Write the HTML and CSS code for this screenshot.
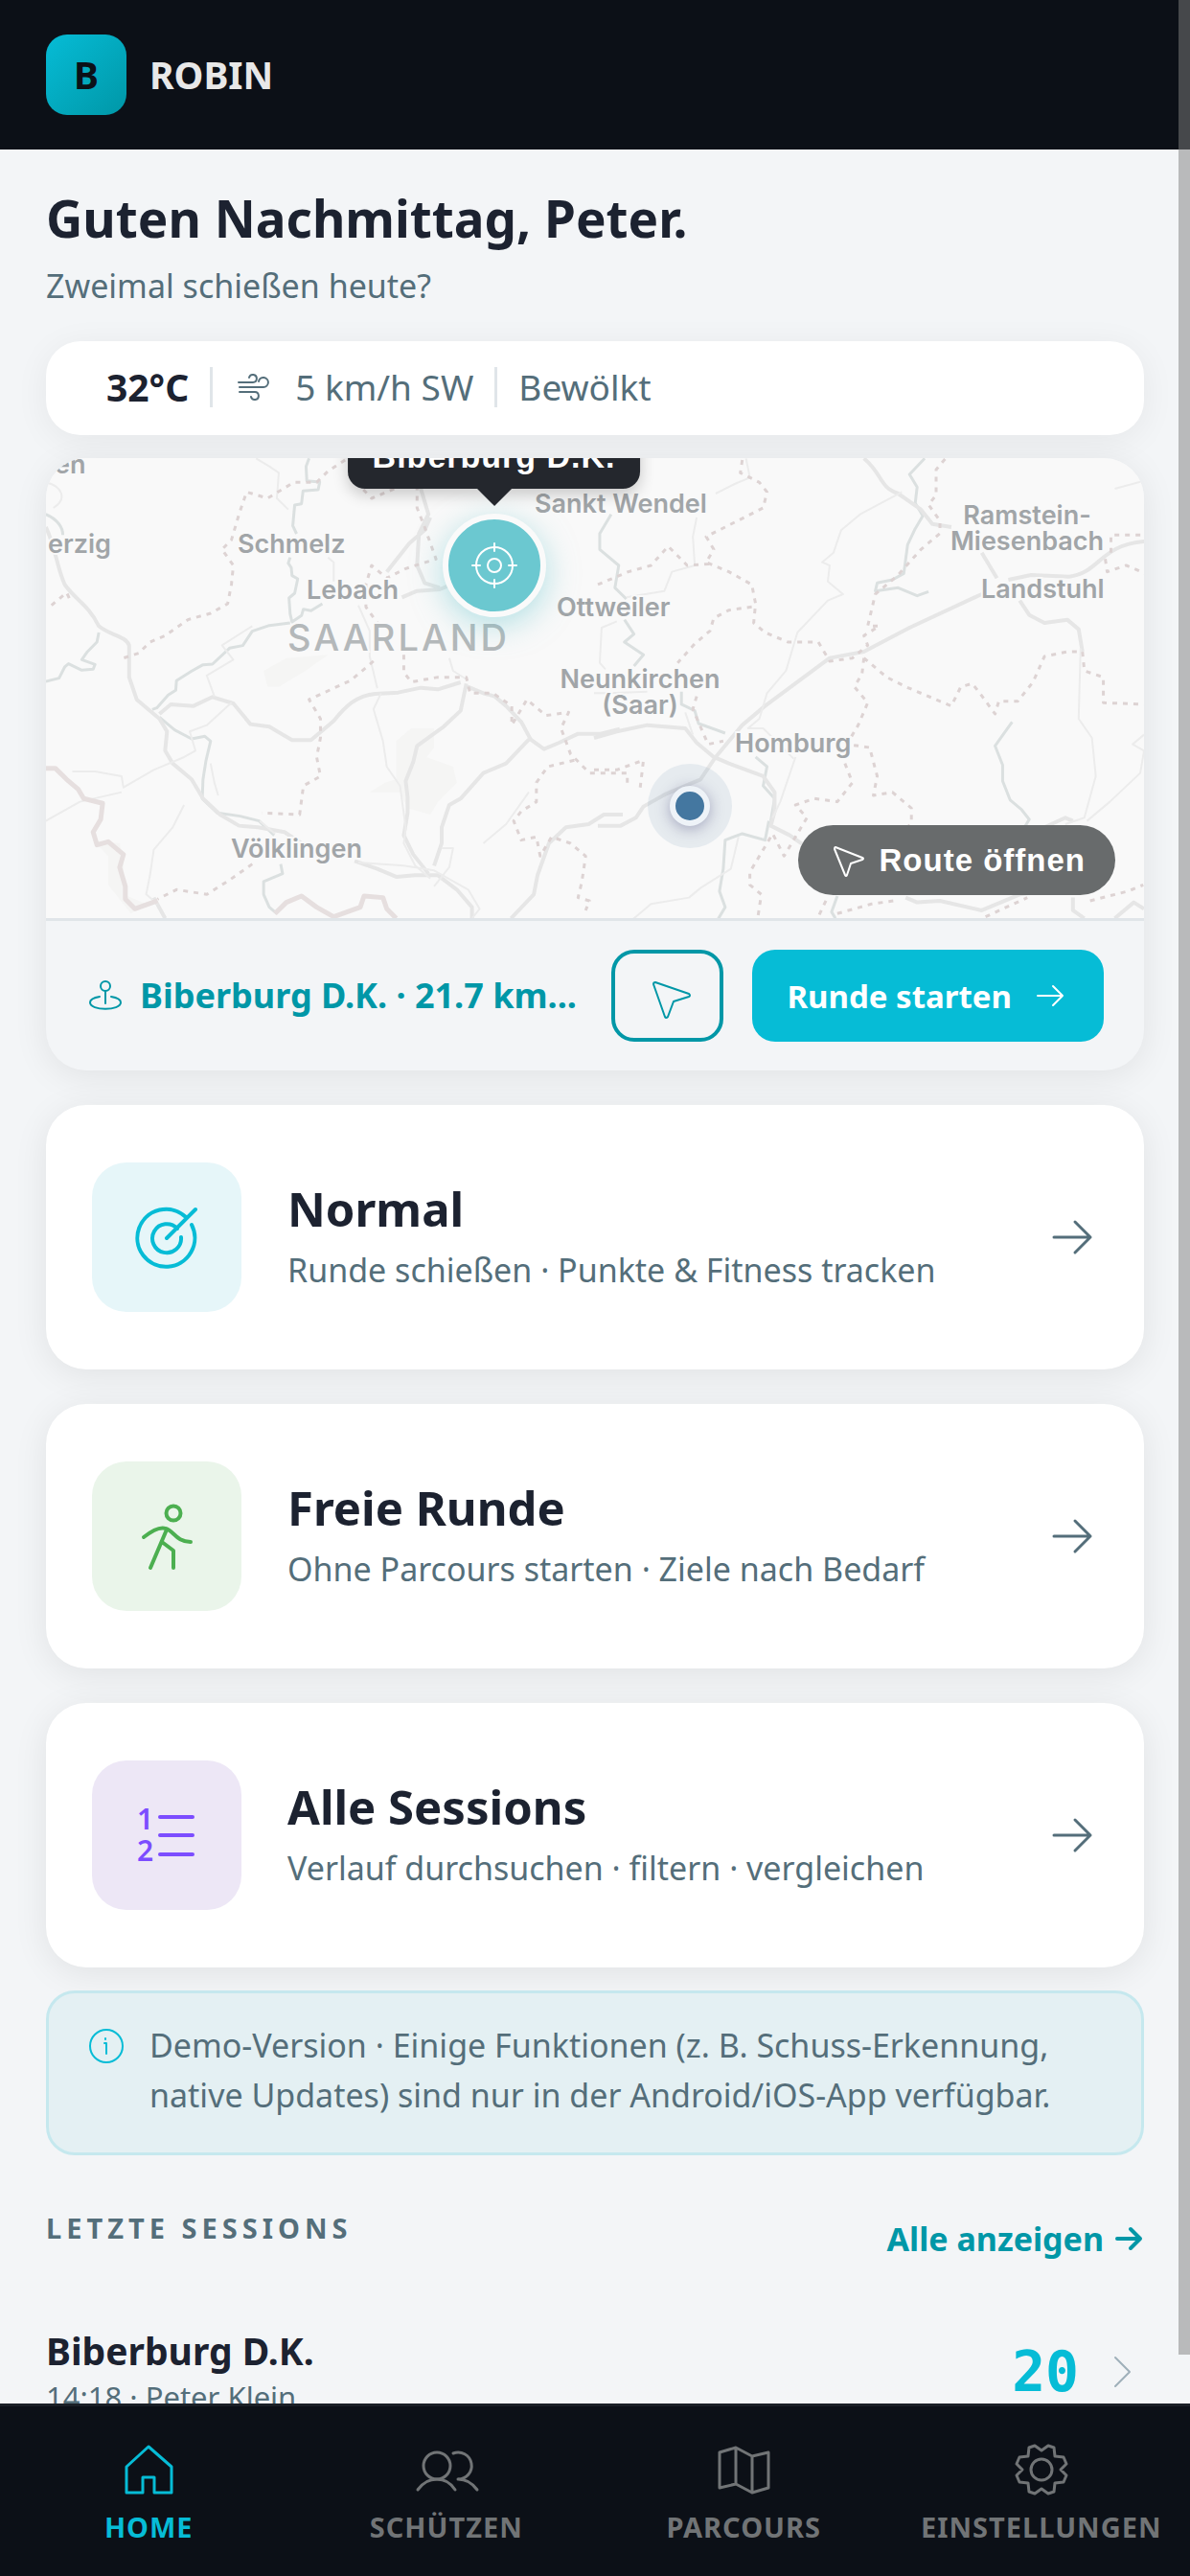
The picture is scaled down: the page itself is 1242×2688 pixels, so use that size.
FILE: index.html
```html
<!DOCTYPE html>
<html lang="de">
<head>
  <meta charset="UTF-8">
  <meta name="viewport" content="width=device-width, initial-scale=1.0">
  <title>ROBIN</title>
  <link rel="stylesheet" href="styles.css">
</head>
<body>
  <header class="topbar">
    <div class="logo">B</div>
    <div class="brand">ROBIN</div>
  </header>

  <main class="content">
    <h1>Guten Nachmittag, Peter.</h1>
    <p class="subtitle">Zweimal schießen heute?</p>

    <div class="weather">
      <strong>32°C</strong>
      <span class="divider"></span>
      <svg class="icon" width="42" height="42" viewBox="0 0 42 42">
        <path d="M5 16h15a4 4 0 1 0-4-5M6 21h25a5 5 0 1 0-5-6M6 26h16a4 4 0 1 1-4 5"/>
      </svg>
      <span>5 km/h SW</span>
      <span class="divider"></span>
      <span>Bewölkt</span>
    </div>

    <section class="map-card">
      <div class="map">
        <svg class="map-tiles" viewBox="0 0 1146 480" preserveAspectRatio="xMinYMin slice">
          <!-- west half -->
          <g transform="translate(-18 -18) scale(.3954 .3333)">
            <path class="area" d="M970 940l40-40 60 0 0 60-20 30 70 30 10 50-50 60-20 40-60-20-20-50-80 0 40-30 30-10z"/>
            <path class="area" d="M620 720l60-40 110-10-60 50-70 50-30 0z"/>
            <path class="area" d="M170 1250l70 10 10 60 0 100 60 30-40 30-60-90 0-90z"/>
            <path class="river" d="M740 55l-8 25 2 45 34 4-4 24-40 4-4 40-18 4-5 65 10 25M690 365l-5 18 8 14 2 25 15 10-8 45-15 15 3 50 5 25 25-20 5-20 20 5 30-22M690 570l-55 8-45 18-25 45-35 8-45 50-25 2-30 20-40 30-2 30-20 15-30 40-12 5"/>
            <path class="river" d="M45 230c30 15 45 40 45 65M185 600l-5 30-25 30-15 25 35 15-5 15-30 3-35-20-10 10-15 35-35 10M345 865l40 40 45 28 35-8 15 15-12 60-8 60-2 60 40 45 60 10 50 15 40 45M665 1325l5 30-50 25 0 40 15 40 20 20"/>
            <path class="road major" d="M45 270c25 60 30 130 50 180 30 50 60 60 90 130 30 30 70 30 80 60l0 100 20 70 60 60 20 40-5 60 20 40 50 50 30 60 45 50 50 35 50 5 70 15 45 35M345 855l30-30 60 5 50-28 55 20 45 65 50 8 60 42 50 0 60-60c30-45 60-80 110-85l60-4 60-15 45 5 60-22"/>
            <path class="road major" d="M1150 765l50 25 30 10 30 30 40 50 25 55 35 30 40-20 50-28 60 0 50-15M1155 760l-15 85-45 50-70 60-10 50-20 60 5 50 0 50-10 70 25 60 40 60M1320 935l-60 75-60 30-60 80-30 20-20 70 0 50-20 70M1568 1170h-50l-40 30-60 10-45 50-30 100-10 60-60 75"/>
            <path class="road major" d="M860 1315l60 25 50 25 50-5 60 0 50 45 40 55 0 35M330 1430l30 65M1060 240l-15 40-40 40-60 90M985 490l40-20 60-5 40-20M1030 130l25 100-25 60-5 100 20 55 40 15"/>
            <path class="road" d="M930 790l-20 50 25 100 10 80 35 60 15 130-5 50 30 70 40 40M590 580l-80 60 30 45-70 50 20 65M535 820l-65 70-45 20 15 60-30 20-80 40-80 55-5-35-70-15-60 0M245 1100l-110 30-90 60M410 1140l-30 70-50 70-10 80-10 60 30 30M600 55l35 25 25 20-5 80 30 35M45 130c40 10 60 50 20 80M870 515l30 80 0 80 20 100M1110 680l10 40 40 30M790 365l15 15 0 60M480 1010l10 60 10 40M610 1190l40 40M870 1320l120 10 80 15 90 60 30 60-20 30M1090 1275l30 0-10 60-40 60M1200 1260l60-60 60-100"/>
            <path class="border" d="M835 60l-45 35-30 35-60 0-70 50-55-20-20 70-20 80-25 30 30 50-5 60-10 60-45 30-60 20-60 50-40 20-30 35-40 15M60 515l40-40 10 25M845 105l60 75 60-30 60-20 0 80 20 60 30 100-80 30-50 30-40-40-15 60 0 70 30 50"/>
            <path class="border" d="M990 670l0 55 20 30 70-15 75 0 10 50 60 0 50 40 0 60 40-80 50 50 60-10-20 50 25 80 50 60 100 0 0 30M910 690l-60 60-110 60 30 60 0 60-10 60 10 60-45 30-10 90-100-5M1440 1000l-70 20-30 50 0 60-40 30-20 30 20 60 40-10 10 60 30-60 50 20 40 40-10 80-10 50 30 10-10 30M590 1325l-60 50-60 45-80-15-50 30"/>
            <path class="state" d="M45 1025l25 0 30 35 30 30 15 30 50 15-5 50-20 40 10 40 30-10 40 40-10 40 15 60 0 40 25 30 60-25M650 1480l30-35 40-20 40 35 45 30 70-30 10-35 50 5 10 35 25 30"/>
          </g>
          <!-- east half -->
          <g transform="translate(572 -18) scale(.3967 .3333)">
            <path class="river" d="M870 55l-40 50 20 40-5 50 20 40-20 40-20 50-10 90-30 20-40 10-5 25 60-10 50 25 30-13M45 230l-30 60 0 50 50 50-10 70 30 35M80 560l25 45-25 25 50 40-25 35M230 785l0 40 35 20 10 40 70 30M425 990l30 30-10 60 30 40-10 70M460 1190l-10 60-60-20-45 20-5 90-10 70 15 50-20 40-30 10M1100 880l-45 75 20 60 0 50 20 60 30 30 20 30-20 40M640 1425l-15 50 10 20"/>
            <path class="road major" d="M710 55c50 50 40 90 90 110l60 50 30 45 50 10M1020 350l40 80M1090 435l60-15 100 5c80-10 80-100 200-110M1020 480l-190 105-120 75-90 20-170 150-60 60-70 100-40 70-90 45-60 40-20 35-40 25-60 0M0 930l60-20 80-20 100 10 30 45 45 45 40 20 90 40 30 50 0 60-10 45 50 30 60 50 40 20M1120 500l25 45 40 25 60-10 30 30 10 70M820 1430l30 15 60-5 110 30 100-50 60-10M1260 1190l-20-10-110 60M1260 1430l0 40 30 25M1370 1495l50-50 27 20"/>
            <path class="road" d="M400 55l10 60-40 20-50 30M810 160l-110 70-50 50-20 70-30 30 20 10-5 50 40 40-40 20-80 100-30 120-50 70-20 80-30 30 40 0 80 95M530 990l-40 140-20 50M380 1240l-20 100-80 60-30 30-100 20-50 50M1280 650l-5 220 35 60 10 120-30 130-50 20M1447 920l-30 30 30 20-10 70-80 90-60 60M270 240l-10 60 5 90-60 20-20 60-100 20M60 565l-40 20-5 110 15 20M240 850l20 70M0 790l40 0 100-5M1370 150l77-25"/>
            <path class="border" d="M390 60l-5 40 50 30 20 30-10 50-100 60-50 30 20 40-20 40 60 30 60 40 10 60-5 60 30 30 60 30 80 0 30 60 60-10 40-40-10-30 40-30-30 0 20-100 60-60 60-80 50-50 0-40-30-50 20-30 0-80 50-70-10-60M10 450l80-40 60-20 45-60 50 60 60-5M415 520l-60 10-40 25-10 40-40 40-45 60"/>
            <path class="border" d="M710 680l60 60 50 30 120 60 25-60 30-10 20 30 40 65 10-40 50 0 40-60 30-80 60-15 40 0 5 60 50 20 0 80 110 5M710 680l-5 50-20 40 35 50-25 70-30 60 60 10 20 90-10 60 50-10 50 50 0 45-20 30M660 1010l20 60-40 60-60-10-50 20 30 40-30 60-30 60-30-70-60 120 0 40 30 30-10 80M0 1030l60 0 70-30-10 100M270 800l-10 40 40 110 40-10M1360 350l0-55 90 0M1345 370l5 40 50-20 50 25M640 1480l90-30 60-10M1030 1490l110-60M610 1440l-20 50M1305 1440l100-30 40-20"/>
          </g>
          <g class="places">
            <text x="9" y="16">en</text>
            <text x="2" y="99">erzig</text>
            <text x="200" y="99">Schmelz</text>
            <text x="272" y="147">Lebach</text>
            <text x="510" y="57">Sankt Wendel</text>
            <text x="533" y="165">Ottweiler</text>
            <text x="620" y="240" text-anchor="middle">Neunkirchen</text>
            <text x="620" y="267" text-anchor="middle">(Saar)</text>
            <text x="719" y="307">Homburg</text>
            <text x="1024" y="69" text-anchor="middle">Ramstein-</text>
            <text x="1024" y="96" text-anchor="middle">Miesenbach</text>
            <text x="976" y="146">Landstuhl</text>
            <text x="193" y="417">Völklingen</text>
            <text class="region" x="252" y="201">SAARLAND</text>
          </g>
        </svg>

        <div class="marker course">
          <div class="tooltip">Biberburg D.K.</div>
          <svg class="icon" width="54" height="54" viewBox="0 0 54 54">
            <circle cx="27" cy="27" r="19"/>
            <circle cx="27" cy="27" r="7"/>
            <path d="M27 4v8M27 42v8M4 27h8M42 27h8"/>
          </svg>
        </div>
        <div class="marker me"></div>

        <button class="route-pill">
          <svg class="icon" width="42" height="42" viewBox="0 0 42 42">
            <path d="M8 7 36 18Q38 19 36 20L24 24 20 36Q19 38 18 36L7 9Q7 7 8 7z"/>
          </svg>
          Route öffnen
        </button>
      </div>

      <div class="map-footer">
        <svg class="icon place-icon" width="42" height="42" viewBox="0 0 42 42">
          <circle cx="20" cy="11" r="5"/>
          <path d="M20 16v13M14 22C8 23 4 25 4 28c0 9 32 9 32 0 0-3-4-5-10-6"/>
        </svg>
        <span class="place">Biberburg D.K. · 21.7 km...</span>
        <button class="btn-route" aria-label="Route">
          <svg class="icon" width="54" height="54" viewBox="0 0 54 54">
            <path d="M14 13 49 25Q51 27 49 28L33 33 27 49Q25 51 24 49L12 15Q12 13 14 13z"/>
          </svg>
        </button>
        <button class="btn-start">
          Runde starten
          <svg class="icon" width="42" height="42" viewBox="0 0 42 42">
            <path d="M9 21h26M25 11l10 10-10 10"/>
          </svg>
        </button>
      </div>
    </section>

    <a class="card" href="#normal">
      <div class="card-icon cyan">
        <svg class="icon" width="72" height="72" viewBox="0 0 72 72">
          <path d="M56 15A30 30 0 1 0 62 23M47 27A15 15 0 1 0 51 36M36 37 66 7"/>
        </svg>
      </div>
      <div class="card-text">
        <h2>Normal</h2>
        <p>Runde schießen · Punkte &amp; Fitness tracken</p>
      </div>
      <svg class="icon arrow" width="60" height="60" viewBox="0 0 60 60">
        <path d="M14 30h38M36 14l16 16-16 16"/>
      </svg>
    </a>

    <a class="card" href="#frei">
      <div class="card-icon green">
        <svg class="icon" width="72" height="72" viewBox="0 0 72 72">
          <circle cx="43" cy="12" r="7.5"/>
          <path d="M12 37Q27 25 35 28C43 30 46 42 61 42M36 29 19 69M31 42l12 9v18"/>
        </svg>
      </div>
      <div class="card-text">
        <h2>Freie Runde</h2>
        <p>Ohne Parcours starten · Ziele nach Bedarf</p>
      </div>
      <svg class="icon arrow" width="60" height="60" viewBox="0 0 60 60">
        <path d="M14 30h38M36 14l16 16-16 16"/>
      </svg>
    </a>

    <a class="card" href="#sessions">
      <div class="card-icon purple">
        <svg class="icon" width="72" height="72" viewBox="0 0 72 72">
          <text x="5" y="30">1</text>
          <text x="5" y="63">2</text>
          <path d="M29 17h34M29 36h34M29 56h34"/>
        </svg>
      </div>
      <div class="card-text">
        <h2>Alle Sessions</h2>
        <p>Verlauf durchsuchen · filtern · vergleichen</p>
      </div>
      <svg class="icon arrow" width="60" height="60" viewBox="0 0 60 60">
        <path d="M14 30h38M36 14l16 16-16 16"/>
      </svg>
    </a>

    <div class="info">
      <svg class="icon" width="42" height="42" viewBox="0 0 42 42">
        <circle cx="21" cy="21" r="17"/>
        <path d="M19 18h2v11M20 13v1"/>
      </svg>
      <p>Demo-Version · Einige Funktionen (z. B. Schuss-Erkennung, native Updates) sind nur in der Android/iOS-App verfügbar.</p>
    </div>

    <div class="section-head">
      <h3>Letzte Sessions</h3>
      <a href="#alle">Alle anzeigen
        <svg class="icon" width="30" height="30" viewBox="0 0 30 30">
          <path d="M2 15h24M16 5l10 10-10 10"/>
        </svg>
      </a>
    </div>

    <a class="session" href="#session">
      <div class="session-text">
        <div class="session-name">Biberburg D.K.</div>
        <div class="session-meta">14:18 · Peter Klein</div>
      </div>
      <span class="score">20</span>
      <svg class="icon" width="48" height="48" viewBox="0 0 48 48">
        <path d="M18 9l15 15-15 15"/>
      </svg>
    </a>
  </main>

  <nav class="tabbar">
    <a class="active" href="#home">
      <svg class="icon" width="60" height="60" viewBox="0 0 60 60">
        <path d="M30 6 54 27V54H36V38H24V54H7V27z"/>
      </svg>
      Home
    </a>
    <a href="#schuetzen">
      <svg class="icon" width="60" height="60" viewBox="0 0 60 60">
        <circle cx="20" cy="26" r="14"/>
        <path d="M0 51Q8 40 20 40T39 51M37 13A14 14 0 1 1 42 40Q54 40 62 51"/>
      </svg>
      Schützen
    </a>
    <a href="#parcours">
      <svg class="icon" width="60" height="60" viewBox="0 0 60 60">
        <path d="M5 12 22 7 39 16 56 12V49L39 54 22 45 5 49zM22 7v38M39 16v38"/>
      </svg>
      Parcours
    </a>
    <a href="#einstellungen">
      <svg class="icon" width="60" height="60" viewBox="0 0 60 60">
        <circle cx="30" cy="30" r="11"/>
        <path d="M30 10 23 5 17 7 16 16 7 17 4 24 10 30 4 36 7 43 16 44 17 53 23 55 30 50 37 55 43 53 44 44 53 43 56 36 50 30 56 24 53 17 44 16 43 7 37 5z"/>
      </svg>
      Einstellungen
    </a>
  </nav>

  <div class="scroll-thumb"></div>
</body>
</html>
```
FILE: styles.css
```css
* { box-sizing: border-box; }
body {
  margin: 0;
  height: 100vh;
  display: flex;
  flex-direction: column;
  overflow: hidden;
  position: relative;
  background: #f3f5f7;
  color: #1c2230;
  font-family: "Noto Sans", sans-serif;
  font-size: 34px;
  line-height: 52px;
}
h1, h2, h3, p { margin: 0; }
a { color: inherit; text-decoration: none; }
button {
  border: none;
  font-family: inherit;
  cursor: pointer;
}
.icon {
  display: block;
  flex: none;
  fill: none;
  stroke: currentColor;
  stroke-width: 2;
  stroke-linecap: round;
  stroke-linejoin: round;
  overflow: visible;
}

/* header */
.topbar {
  flex: none;
  display: flex;
  align-items: center;
  gap: 24px;
  padding: 36px 48px;
  background: #0c1017;
}
.logo {
  width: 84px;
  height: 84px;
  display: flex;
  align-items: center;
  justify-content: center;
  border-radius: 22px;
  background: linear-gradient(135deg, #06bcd6, #0097a7);
  color: #0c1017;
  font-size: 39px;
  font-weight: 700;
}
.brand {
  color: #e8e8e8;
  font-size: 39px;
  font-weight: 700;
}

.content {
  flex: 1;
  min-height: 0;
  overflow: hidden;
  padding: 40px 48px 0;
}
h1 {
  font-size: 53px;
  line-height: 64px;
}
.subtitle {
  margin-top: 12px;
  color: #546e7a;
}

.weather {
  display: flex;
  align-items: center;
  gap: 22px;
  margin-top: 32px;
  padding: 22px 63px 24px;
  border-radius: 36px;
  background: #fff;
  box-shadow: 0 6px 36px rgba(0, 0, 0, 0.06);
  color: #546e7a;
  font-size: 37px;
}
.weather strong {
  color: #1c2230;
  font-size: 39px;
}
.divider {
  width: 3px;
  height: 42px;
  background: #e0e5e9;
}

/* map */
.map-card {
  margin-top: 24px;
  border-radius: 42px;
  overflow: hidden;
  background: #f3f5f7;
  box-shadow: 0 6px 36px rgba(0, 0, 0, 0.08);
}
.map {
  position: relative;
  height: 480px;
  overflow: hidden;
  background: #f9f9f9;
}
.map-tiles {
  display: block;
  width: 100%;
  height: 100%;
}
.map-tiles path {
  fill: none;
  stroke-width: 2;
  stroke-linejoin: round;
  vector-effect: non-scaling-stroke;
}
.map-tiles .area { fill: #f5f5f4; }
.map-tiles .river { stroke: #dbe0e0; stroke-width: 3; }
.map-tiles .road { stroke: #ececec; }
.map-tiles .major { stroke: #e6e6e6; stroke-width: 4; }
.map-tiles .border { stroke: #ddd3d3; stroke-width: 3; stroke-dasharray: 5 6; }
.map-tiles .state { stroke: #e6dfdf; stroke-width: 5; }
.places {
  font-family: Inter, sans-serif;
  font-size: 27px;
  font-weight: 600;
  fill: #a1a5a8;
  stroke: #f9f9f9;
  stroke-width: 4;
  paint-order: stroke;
}
.places .region {
  font-size: 38px;
  font-weight: 500;
  letter-spacing: 3px;
  fill: #b4b8ba;
}
.marker {
  position: absolute;
  border-radius: 50%;
  transform: translate(-50%, -50%);
}
.course {
  left: 40.8%;
  top: 112px;
  width: 108px;
  height: 108px;
  display: flex;
  align-items: center;
  justify-content: center;
  border: 6px solid #fafafa;
  background: #6bc8d0;
  box-shadow: 0 8px 32px rgba(107, 200, 208, 0.5);
  color: #fff;
}
.tooltip {
  position: absolute;
  left: 50%;
  bottom: 128px;
  transform: translateX(-50%);
  padding: 12px 26px;
  border-radius: 18px;
  background: #24272d;
  font: 700 34px/44px "Liberation Sans", sans-serif;
  letter-spacing: 1px;
  white-space: nowrap;
  box-shadow: 0 6px 16px rgba(0, 0, 0, 0.2);
}
.tooltip::after {
  content: "";
  position: absolute;
  left: 50%;
  top: 100%;
  margin-left: -18px;
  border: 18px solid transparent;
  border-top-color: #24272d;
}
.me {
  left: 58.6%;
  top: 363px;
  width: 88px;
  height: 88px;
  background: rgba(68, 119, 160, 0.1);
}
.me::after {
  content: "";
  position: absolute;
  inset: 23px;
  border: 6px solid #eef3f8;
  border-radius: 50%;
  background: #4477a0;
  box-shadow: 0 3px 15px rgba(40, 40, 100, 0.35);
}
.route-pill {
  position: absolute;
  right: 30px;
  bottom: 24px;
  height: 73px;
  display: flex;
  align-items: center;
  gap: 12px;
  padding: 0 31px;
  border-radius: 37px;
  background: #686b6c;
  color: #fff;
  font: 700 33px/44px "Liberation Sans", sans-serif;
  letter-spacing: 1px;
}
.map-footer {
  display: flex;
  align-items: center;
  padding: 30px 42px;
  border-top: 3px solid #e0e5e9;
  color: #0097a7;
}
.place {
  flex: 1;
  min-width: 0;
  margin: 0 20px 0 14px;
  overflow: hidden;
  white-space: nowrap;
  text-overflow: ellipsis;
  font-size: 36px;
  font-weight: 700;
}
.btn-route, .btn-start {
  flex: none;
  height: 96px;
  display: flex;
  align-items: center;
  justify-content: center;
  border-radius: 24px;
}
.btn-route {
  width: 117px;
  margin-right: 30px;
  border: 4px solid #0097a7;
  background: transparent;
  color: #0097a7;
}
.btn-start {
  gap: 18px;
  padding: 0 36px;
  background: #06bcd6;
  color: #fff;
  font-size: 33px;
  font-weight: 700;
}

/* menu cards */
.card {
  display: flex;
  align-items: center;
  gap: 48px;
  margin-top: 36px;
  padding: 60px 48px;
  border-radius: 42px;
  background: #fff;
  box-shadow: 0 6px 36px rgba(0, 0, 0, 0.08);
}
.card-icon {
  flex: none;
  width: 156px;
  height: 156px;
  display: flex;
  align-items: center;
  justify-content: center;
  border-radius: 36px;
}
.card-icon .icon { stroke-width: 4; }
.card-icon text {
  fill: currentColor;
  stroke: none;
  font-size: 30px;
  font-weight: 600;
}
.cyan { background: #e6f6f9; color: #06bcd6; }
.green { background: #eaf5ea; color: #4caf50; }
.purple { background: #ede7f6; color: #7c4dff; }
.card-text { flex: 1; }
.card h2 {
  font-size: 49px;
  line-height: 64px;
}
.card p {
  margin-top: 4px;
  line-height: 56px;
  color: #546e7a;
}
.card .arrow {
  color: #546e7a;
  stroke-width: 3;
}

.info {
  display: flex;
  gap: 24px;
  margin-top: 24px;
  padding: 28px 39px 34px;
  border: 3px solid #c5e8ee;
  border-radius: 30px;
  background: #e4f0f3;
  color: #546e7a;
}
.info .icon {
  margin-top: 6px;
  color: #06bcd6;
}

/* latest sessions */
.section-head {
  display: flex;
  justify-content: space-between;
  margin-top: 56px;
}
.section-head h3 {
  color: #546e7a;
  font-size: 29px;
  line-height: 40px;
  letter-spacing: 5px;
  text-transform: uppercase;
}
.section-head a {
  display: flex;
  align-items: center;
  gap: 12px;
  color: #0097a7;
  font-size: 34px;
  font-weight: 700;
  line-height: 62px;
}
.section-head .icon { stroke-width: 4; }
.session {
  display: flex;
  align-items: center;
  gap: 20px;
  margin-top: 60px;
}
.session-text { flex: 1; }
.session-name {
  font-size: 39px;
  font-weight: 700;
}
.session-meta {
  color: #546e7a;
  font-size: 31px;
  line-height: 44px;
}
.score {
  color: #06bcd6;
  font-family: "DejaVu Sans Mono", monospace;
  font-size: 58px;
  font-weight: 700;
}
.session .icon { color: #9fb0ba; }

/* bottom navigation */
.tabbar {
  flex: none;
  display: grid;
  grid-template-columns: repeat(4, 1fr);
  padding: 36px 0 33px;
  border-top: 3px solid #1a1f26;
  background: #0c1017;
}
.tabbar a {
  display: flex;
  flex-direction: column;
  align-items: center;
  gap: 12px;
  color: #717476;
  font-size: 29px;
  font-weight: 700;
  line-height: 36px;
  letter-spacing: 1px;
  text-transform: uppercase;
}
.tabbar a.active { color: #06bcd6; }
.tabbar .icon { stroke-width: 3; }

.scroll-thumb {
  position: absolute;
  top: 0;
  right: 0;
  bottom: 231px;
  width: 12px;
  background: rgba(128, 128, 128, 0.5);
}
```
